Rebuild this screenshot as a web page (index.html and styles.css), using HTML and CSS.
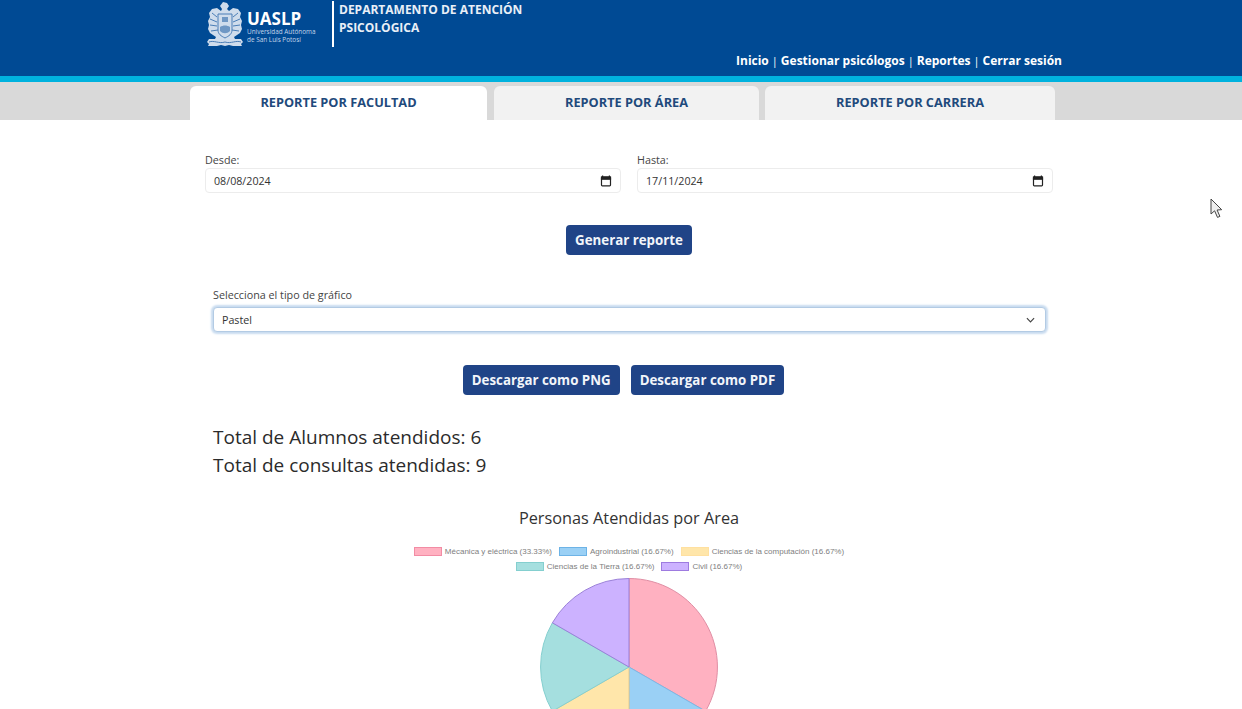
FILE: index.html
```html
<!DOCTYPE html>
<html lang="es">
<head>
<meta charset="utf-8">
<title>Reportes</title>
<link rel="stylesheet" href="styles.css">
</head>
<body>
<header class="site-header">
  <div class="brand">
    <svg class="crest" viewBox="0 0 36 44" aria-hidden="true">
      <path class="crest-fill" d="M16 0L20 1L22 4L20 7L22 9L26 6L31 7L34 11L33 15L35 19L34 23L35 27L33 31L30 33L27 35L28 37L34 37L36 40L34 42L35 44L26 44L22 43L18 44L14 43L10 44L1 44L2 42L0 40L2 37L8 37L9 35L6 33L3 31L1 27L2 23L1 19L3 15L2 11L5 7L10 6L14 9L15 7L13 4Z"/>
      <path class="crest-line" d="M11 12h14v16c0 4-3 6-7 8-4-2-7-4-7-8zM5 11l5 4M3 17l7 3M3 23l7 1M4 29l7-1M31 11l-5 4M33 17l-7 3M33 23l-7 1M32 29l-7-1M2 40c5-2 10 2 16 0 6 2 11-2 16 0"/>
      <path class="crest-inner" d="M15 15h6v5h-6zM13 25c3-2 7-2 10 0v4c-3 3-7 3-10 0z"/>
    </svg>
    <div class="brand-text">
      <span class="brand-name">UASLP</span>
      <span class="brand-sub">Universidad Autónoma<br>de San Luis Potosí</span>
    </div>
    <div class="dept">DEPARTAMENTO DE ATENCIÓN<br>PSICOLÓGICA</div>
  </div>
  <nav class="main-nav">
    <a>Inicio</a><span class="sep">|</span><a>Gestionar psicólogos</a><span class="sep">|</span><a>Reportes</a><span class="sep">|</span><a>Cerrar sesión</a>
  </nav>
</header>
<div class="accent-bar"></div>
<div class="tabs">
  <div class="tab tab-active">REPORTE POR FACULTAD</div>
  <div class="tab tab-area">REPORTE POR ÁREA</div>
  <div class="tab tab-carrera">REPORTE POR CARRERA</div>
</div>
<main class="content">
  <section class="dates">
    <div class="field">
      <label class="label">Desde:</label>
      <div class="input"><span>08/08/2024</span>
        <svg class="cal" viewBox="0 0 12 12" aria-hidden="true"><path d="M2.6.5v1.5M9.4.5v1.5"/><rect x="1.5" y="2" width="9" height="8.8" rx=".8"/><rect class="cal-top" x="1.5" y="2" width="9" height="2.2"/></svg>
      </div>
    </div>
    <div class="field">
      <label class="label">Hasta:</label>
      <div class="input"><span>17/11/2024</span>
        <svg class="cal" viewBox="0 0 12 12" aria-hidden="true"><path d="M2.6.5v1.5M9.4.5v1.5"/><rect x="1.5" y="2" width="9" height="8.8" rx=".8"/><rect class="cal-top" x="1.5" y="2" width="9" height="2.2"/></svg>
      </div>
    </div>
  </section>
  <div class="actions actions-generate"><button class="btn">Generar reporte</button></div>
  <section class="chart-type">
    <label class="label">Selecciona el tipo de gráfico</label>
    <div class="select"><span>Pastel</span>
      <svg class="chev" viewBox="0 0 10 6" aria-hidden="true"><path d="M1 1l4 4 4-4"/></svg>
    </div>
  </section>
  <div class="actions actions-download">
    <button class="btn">Descargar como PNG</button>
    <button class="btn">Descargar como PDF</button>
  </div>
  <section class="totals">
    <p>Total de Alumnos atendidos: 6</p>
    <p>Total de consultas atendidas: 9</p>
  </section>
  <section class="chart">
    <h2 class="chart-title">Personas Atendidas por Area</h2>
    <div class="legend">
      <div class="legend-row">
        <span class="item"><i class="sw sw-pink"></i>Mécanica y eléctrica (33.33%)</span>
        <span class="item"><i class="sw sw-blue"></i>Agroindustrial (16.67%)</span>
        <span class="item"><i class="sw sw-yellow"></i>Ciencias de la computación (16.67%)</span>
      </div>
      <div class="legend-row">
        <span class="item"><i class="sw sw-teal"></i>Ciencias de la Tierra (16.67%)</span>
        <span class="item"><i class="sw sw-purple"></i>Civil (16.67%)</span>
      </div>
    </div>
    <svg class="pie" viewBox="-90 -90 180 180" aria-hidden="true">
      <path class="s-pink" d="M0 0V-88.5A88.5 88.5 0 0 1 76.6 44.2Z"/>
      <path class="s-blue" d="M0 0L76.6 44.2A88.5 88.5 0 0 1 0 88.5Z"/>
      <path class="s-yellow" d="M0 0V88.5A88.5 88.5 0 0 1 -76.6 44.2Z"/>
      <path class="s-teal" d="M0 0L-76.6 44.2A88.5 88.5 0 0 1 -76.6 -44.2Z"/>
      <path class="s-purple" d="M0 0L-76.6 -44.2A88.5 88.5 0 0 1 0 -88.5Z"/>
    </svg>
  </section>
</main>
<svg class="cursor" viewBox="0 0 13 21" aria-hidden="true"><path d="M1 1v15l3.6-3.2 2.9 6.6 2.4-1-2.8-6.4 4.6-.3z"/></svg>
</body>
</html>
```
FILE: styles.css
```css
* { box-sizing: border-box; }
html, body { height: 100%; }
body {
  margin: 0;
  overflow: hidden;
  position: relative;
  background: #fff;
  color: #212529;
  font-family: "Open Sans", "Noto Sans", sans-serif;
}
.site-header {
  height: 76px;
  background: #004a94;
  color: #fff;
  padding: 0 180px 0 207px;
  display: flex;
  flex-direction: column;
}
.brand { display: flex; height: 47px; }
.crest { width: 36px; height: 44px; margin-top: 2px; flex: none; }
.crest-fill { fill: #cfdcec; }
.crest-line { fill: none; stroke: #4a7db6; stroke-width: 1; }
.crest-inner { fill: #6f97c4; }
.brand-text { margin-left: 4px; width: 85px; display: flex; flex-direction: column; padding-top: 10px; }
.brand-name { font: 700 17px/18px "Open Sans", sans-serif; }
.brand-sub { font-size: 6.4px; line-height: 8px; color: #c5d6ea; white-space: nowrap; }
.dept {
  border-left: 2px solid #fff;
  margin-top: 1px;
  padding: 0 0 0 5px;
  font-size: 12px;
  font-weight: 700;
  line-height: 18px;
  height: 46px;
  color: #e9eff7;
}
.main-nav {
  margin-top: 6px;
  align-self: flex-end;
  font-size: 12px;
  font-weight: 700;
  line-height: 16px;
  white-space: nowrap;
}
.sep { font-weight: 400; margin: 0 3px; font-size: 11px; }
.accent-bar { height: 6px; background: #00b2de; }
.tabs {
  height: 38px;
  background: #d9d9d9;
  padding: 4px 0 0 190px;
  display: flex;
  gap: 7px;
}
.tab {
  height: 34px;
  padding-bottom: 2px;
  border-radius: 6px 6px 0 0;
  background: #f2f2f2;
  color: #1f4a7c;
  font-size: 12.75px;
  font-weight: 700;
  display: flex;
  align-items: center;
  justify-content: center;
}
.tab-active { width: 297px; background: #fff; }
.tab-area { width: 265px; }
.tab-carrera { width: 290px; margin-left: -1px; }
.content { padding: 33px 0 0 205px; width: 1053px; }
.dates { display: grid; grid-template-columns: 1fr 1fr; gap: 16px; }
.label { display: block; font-size: 10.75px; line-height: 15px; color: #444; }
.input {
  height: 25px;
  border: 1px solid #ececec;
  border-radius: 4px;
  background: #fff;
  padding: 0 8px;
  display: flex;
  align-items: center;
  justify-content: space-between;
  font-size: 10.7px;
  color: #333;
}
.cal { width: 12px; height: 12px; fill: none; stroke: #222; stroke-width: 1.2; }
.cal-top { fill: #222; }
.actions { display: flex; justify-content: center; gap: 11px; }
.actions-generate { margin-top: 32px; }
.actions-download { margin-top: 33px; padding-right: 11px; }
.btn {
  height: 30px;
  padding: 0 9px;
  border: 0;
  border-radius: 4px;
  background: #204487;
  color: #f2f5fa;
  font: 700 13.3px/30px "Open Sans", sans-serif;
}
.chart-type { margin: 33px 7px 0 8px; }
.select {
  margin-top: 4px;
  height: 25px;
  border: 1px solid #b3cbe4;
  border-radius: 4px;
  box-shadow: 0 0 2px 2px #c9dcf0;
  background: #fff;
  padding: 0 10px 0 8px;
  display: flex;
  align-items: center;
  justify-content: space-between;
  font-size: 10.7px;
  color: #333;
}
.chev { width: 9px; height: 6px; fill: none; stroke: #444; stroke-width: 1.3; }
.totals { margin: 28px 0 0 8px; font-size: 19px; line-height: 28px; color: #2b2b2b; }
.totals p { margin: 0; }
.chart { margin-left: 8px; width: 832px; display: flex; flex-direction: column; align-items: center; }
.chart-title { margin: 27px 0 0; font-size: 16.3px; font-weight: 400; line-height: 24px; color: #333; }
.legend { margin-top: 16px; display: flex; flex-direction: column; gap: 4px; }
.legend-row { display: flex; justify-content: center; gap: 7px; height: 11px; }
.item {
  display: flex;
  align-items: center;
  gap: 3px;
  font: 8px/11px "Liberation Sans", Arial, sans-serif;
  color: #808080;
  white-space: nowrap;
}
.sw { width: 28px; height: 9px; border: 1px solid; }
.sw-pink { background: #ffb1c1; border-color: #f28ca4; }
.sw-blue { background: #9ad0f5; border-color: #6db3e6; }
.sw-yellow { background: #ffe6aa; border-color: #ffe0a0; }
.sw-teal { background: #a5dfdf; border-color: #84cfcf; }
.sw-purple { background: #ccb2ff; border-color: #9e7be0; }
.pie { width: 180px; height: 180px; margin-top: 5px; flex: none; }
.pie path { stroke-width: 1; }
.s-pink { fill: #ffb1c1; stroke: #e08ea4; }
.s-blue { fill: #9ad0f5; stroke: #7ab8e6; }
.s-yellow { fill: #ffe6aa; stroke: #e6cc90; }
.s-teal { fill: #a5dfdf; stroke: #84cfcf; }
.s-purple { fill: #ccb2ff; stroke: #9a80d8; }
.cursor {
  position: absolute;
  left: 1210px;
  top: 198px;
  width: 13px;
  height: 21px;
  fill: #eee;
  stroke: #444;
  stroke-width: 1;
}
```
